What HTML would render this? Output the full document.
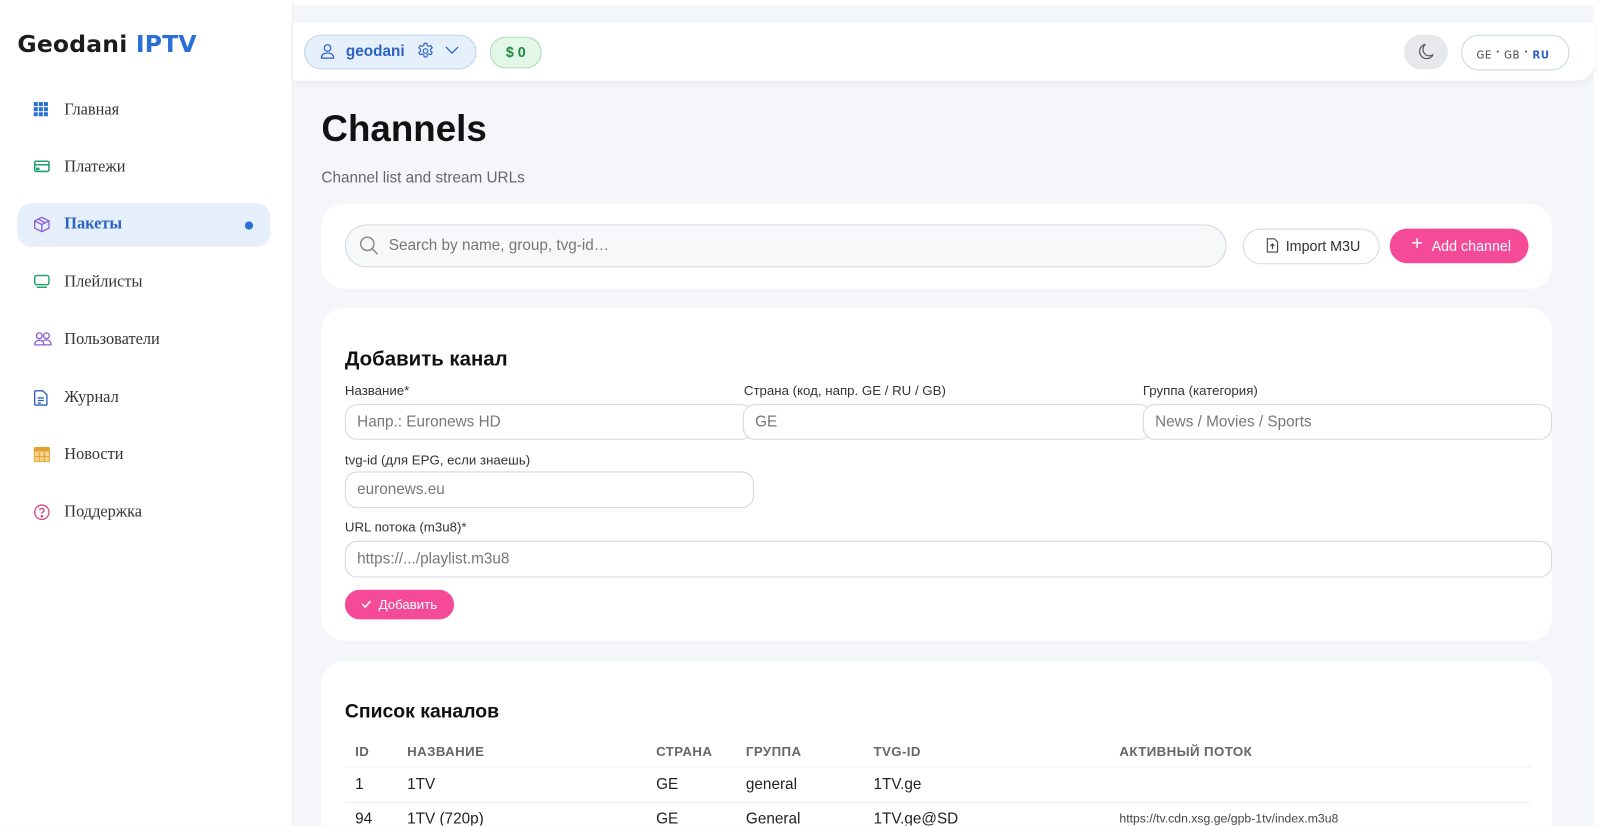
<!DOCTYPE html>
<html><head><meta charset="utf-8"><style>
*{box-sizing:border-box;margin:0;padding:0}
html,body{width:1600px;height:826px;overflow:hidden;background:#f4f6fa}
body{font-family:"Liberation Sans",sans-serif}
#w{position:absolute;left:0;top:0;width:1568px;height:809px;overflow:hidden;transform:scale(1.0204);transform-origin:0 0;background:#f4f6fa}
.sb{position:absolute;left:0;top:0;width:287px;height:809px;background:#fff;border-right:1px solid #eceef3}
.logo{position:absolute;left:17px;top:31px;font-family:"DejaVu Sans",sans-serif;font-weight:bold;font-size:23px;color:#1c1c1c;letter-spacing:0.2px}
.logo span{color:#2a6fd6}
.nav{position:absolute;left:17px;width:248px;height:43px;border-radius:14px}
.nav svg{position:absolute;left:16px;top:13px}
.nav .t{position:absolute;left:46px;top:12px;font-family:"Liberation Serif",serif;font-size:16px;color:#333}
.act{background:#e6effc}
.act .t{color:#2a62c4;font-weight:bold}
.dot{position:absolute;left:223px;top:18px;width:8px;height:8px;border-radius:50%;background:#2a6fd6}
.top{position:absolute;left:287px;top:0;width:1313px;height:5px;background:#fff}
.rs{position:absolute;left:1562px;top:0;width:6px;height:809px;background:#fff}
.hdr{position:absolute;left:287px;top:22px;width:1276px;height:57px;background:#fff;border-radius:0 0 18px 0;box-shadow:0 2px 6px rgba(0,0,0,.05)}
.pill{position:absolute;border-radius:17px}
h1{position:absolute;left:315px;top:105px;font-size:36px;font-weight:bold;color:#111}
.sub{position:absolute;left:315px;top:166px;font-size:15px;color:#666}
.card{position:absolute;left:315px;width:1206px;background:#fff;border-radius:22px}
.in{position:absolute;border:1px solid #d4d7dd;border-radius:12px;background:#fff;font-size:15px;color:#777;padding-left:11px;line-height:33px}
.lb{position:absolute;font-size:13px;color:#333}
h2{position:absolute;font-size:20px;font-weight:bold;color:#111}
.th{position:absolute;top:729px;font-size:13px;font-weight:bold;color:#666;letter-spacing:.4px}
.td{position:absolute;font-size:15px;color:#222}
.hl{position:absolute;left:338px;width:1162px;height:1px;background:#eceef1}
</style></head><body><div id="w">
<div class="sb">
<div class="logo">Geodani <span>IPTV</span></div>
<div class="nav" style="top:87px"><svg width="14" height="14" viewBox="0 0 14 14" fill="#2a6fd6"><rect x="0" y="0" width="4" height="4"/><rect x="5" y="0" width="4" height="4"/><rect x="10" y="0" width="4" height="4"/><rect x="0" y="5" width="4" height="4"/><rect x="5" y="5" width="4" height="4"/><rect x="10" y="5" width="4" height="4"/><rect x="0" y="10" width="4" height="4"/><rect x="5" y="10" width="4" height="4"/><rect x="10" y="10" width="4" height="4"/></svg><div class="t">Главная</div></div>
<div class="nav" style="top:143px"><svg width="16" height="14" viewBox="0 0 16 14" fill="none" stroke="#22a06b" stroke-width="1.5"><rect x="1" y="2" width="14" height="10" rx="1.5"/><line x1="1" y1="5.5" x2="15" y2="5.5"/><rect x="3" y="9" width="2" height="1" fill="#22a06b"/></svg><div class="t">Платежи</div></div>
<div class="nav act" style="top:199px"><svg width="16" height="16" viewBox="0 0 16 16" fill="none" stroke="#8a5fd6" stroke-width="1.3"><path d="M8 1 15 4.5V11.5L8 15 1 11.5V4.5Z M1 4.5 8 8 15 4.5 M8 8V15 M4.5 2.8 11.5 6.3"/></svg><div class="t">Пакеты</div><div class="dot"></div></div>
<div class="nav" style="top:256px"><svg width="16" height="14" viewBox="0 0 16 14" fill="none" stroke="#22a06b" stroke-width="1.4"><rect x="1" y="1" width="14" height="9" rx="2"/><line x1="3" y1="12.5" x2="13" y2="12.5"/></svg><div class="t">Плейлисты</div></div>
<div class="nav" style="top:312px"><svg width="18" height="14" viewBox="0 0 18 14" fill="none" stroke="#8a5fd6" stroke-width="1.3"><circle cx="5.5" cy="4" r="2.8"/><circle cx="12.5" cy="4" r="2.8"/><path d="M1 13c0-3 2-4.5 4.5-4.5S10 10 10 13Z M9 9c1-.6 2-.8 3.5-.8 2.5 0 4.5 1.5 4.5 4.8H10"/></svg><div class="t">Пользователи</div></div>
<div class="nav" style="top:369px"><svg width="14" height="16" viewBox="0 0 14 16" fill="none" stroke="#2a5fb6" stroke-width="1.3"><path d="M2 1h7l4 4v9a1 1 0 0 1-1 1H2a1 1 0 0 1-1-1V2a1 1 0 0 1 1-1Z M4 8h6 M4 10.5h6 M4 13h3"/></svg><div class="t">Журнал</div></div>
<div class="nav" style="top:425px"><svg width="16" height="15" viewBox="0 0 16 15"><rect x="0.5" y="0.5" width="15" height="14" rx="1" fill="#f7d48a" stroke="#e2a235"/><rect x="0.5" y="0.5" width="15" height="4" fill="#e2a235"/><g stroke="#e2a235" stroke-width="1"><line x1="5.5" y1="5" x2="5.5" y2="14"/><line x1="10.5" y1="5" x2="10.5" y2="14"/><line x1="1" y1="9.5" x2="15" y2="9.5"/></g></svg><div class="t">Новости</div></div>
<div class="nav" style="top:481px"><svg width="16" height="16" viewBox="0 0 16 16" fill="none" stroke="#d6458a" stroke-width="1.3"><circle cx="8" cy="8" r="7"/><path d="M6 6.2a2 2 0 1 1 2.8 1.8c-.6.3-.8.7-.8 1.4"/><circle cx="8" cy="11.8" r=".6" fill="#d6458a"/></svg><div class="t">Поддержка</div></div>
</div>
<div class="top"></div><div class="rs"></div>
<div class="hdr">
<div class="pill" style="left:11px;top:12px;width:169px;height:34px;background:#e6effc;border:1px solid #b9cff0"></div>
<svg style="position:absolute;left:27px;top:20px" width="14" height="16" viewBox="0 0 14 16" fill="none" stroke="#2a62c4" stroke-width="1.2"><circle cx="7" cy="5" r="3.2"/><path d="M1 15c0-3.5 2.5-5 6-5s6 1.5 6 5Z"/></svg>
<div style="position:absolute;left:52px;top:20px;font-size:15px;font-weight:bold;color:#2a62c4">geodani</div>
<svg style="position:absolute;left:121px;top:19px" width="18" height="18" viewBox="0 0 24 24" fill="none" stroke="#2a62c4" stroke-width="1.5"><circle cx="12" cy="12" r="3"/><path d="M10.3 2h3.4l.6 2.8 2 1.1 2.7-1 1.7 2.9-2.1 1.9v2.3l2.1 1.9-1.7 2.9-2.7-1-2 1.1-.6 2.8h-3.4l-.6-2.8-2-1.1-2.7 1-1.7-2.9 2.1-1.9v-2.3L3.3 7.8 5 4.9l2.7 1 2-1.1Z"/></svg>
<svg style="position:absolute;left:149px;top:23px" width="14" height="8" viewBox="0 0 14 8" fill="none" stroke="#2a62c4" stroke-width="1.3"><path d="M1 1l6 6 6-6"/></svg>
<div class="pill" style="left:193px;top:14px;width:51px;height:31px;background:#e3f7e8;border:1px solid #a8dfb6;color:#1e8a3c;font-weight:bold;font-size:14px;text-align:center;line-height:29px">$ 0</div>
<div class="pill" style="left:1089px;top:12px;width:43px;height:34px;background:#e6e8ec;border-radius:17px"></div>
<svg style="position:absolute;left:1103px;top:20px" width="16" height="17" viewBox="0 0 16 17" fill="none" stroke="#555" stroke-width="1.2"><path d="M7 1.5a7 7 0 1 0 7.5 10A6 6 0 0 1 7 1.5Z"/></svg>
<div class="pill" style="left:1145px;top:12px;width:106px;height:35px;border:1px solid #c8d3e6;font-family:'DejaVu Sans',sans-serif;font-size:10px;color:#444;line-height:33px;padding-left:14px;letter-spacing:.5px">GE <sup style="font-size:7px">•</sup> GB <sup style="font-size:7px">•</sup> <b style="color:#2a62c4">RU</b></div>
</div>
<h1>Channels</h1>
<div class="sub">Channel list and stream URLs</div>
<div class="card" style="top:200px;height:83px"></div>
<div class="in" style="left:338px;top:220px;width:864px;height:42px;border-radius:21px;background:#f7f8fa;line-height:40px;padding-left:42px;font-size:15px">Search by name, group, tvg-id…</div>
<svg style="position:absolute;left:352px;top:231px" width="19" height="19" viewBox="0 0 19 19" fill="none" stroke="#888" stroke-width="1.4"><circle cx="8" cy="8" r="6.5"/><line x1="12.8" y1="12.8" x2="18" y2="18"/></svg>
<div class="in" style="left:1218px;top:224px;width:134px;height:35px;border-radius:18px;color:#333;font-size:14px;padding-left:41px;line-height:33px">Import M3U</div>
<svg style="position:absolute;left:1241px;top:233px" width="12" height="15" viewBox="0 0 12 15" fill="none" stroke="#444" stroke-width="1.1"><path d="M1 1h7l3 3v10H1Z M6 11V6 M4 8l2-2 2 2"/></svg>
<div class="pill" style="left:1362px;top:224px;width:136px;height:34px;background:#f54a98;color:#fff;font-size:14px;line-height:34px;padding-left:41px">Add channel</div>
<div style="position:absolute;left:1383px;top:228px;color:#fff;font-size:20px;font-weight:300">+</div>
<div class="card" style="top:302px;height:326px"></div>
<h2 style="left:338px;top:341px">Добавить канал</h2>
<div class="lb" style="left:338px;top:375px">Название*</div>
<div class="lb" style="left:729px;top:375px">Страна (код, напр. GE / RU / GB)</div>
<div class="lb" style="left:1120px;top:375px">Группа (категория)</div>
<div class="in" style="left:338px;top:396px;width:400px;height:35px">Напр.: Euronews HD</div>
<div class="in" style="left:728px;top:396px;width:401px;height:35px">GE</div>
<div class="in" style="left:1120px;top:396px;width:401px;height:35px">News / Movies / Sports</div>
<div class="lb" style="left:338px;top:443px">tvg-id (для EPG, если знаешь)</div>
<div class="in" style="left:338px;top:462px;width:401px;height:36px">euronews.eu</div>
<div class="lb" style="left:338px;top:509px">URL потока (m3u8)*</div>
<div class="in" style="left:338px;top:530px;width:1183px;height:36px">https://.../playlist.m3u8</div>
<div class="pill" style="left:338px;top:578px;width:107px;height:29px;background:#f54a98;color:#fff;font-size:13px;line-height:29px;padding-left:33px;border-radius:15px">Добавить</div>
<svg style="position:absolute;left:354px;top:588px" width="10" height="8" viewBox="0 0 10 8" fill="none" stroke="#fff" stroke-width="1.5"><path d="M1 4l3 3 5-6"/></svg>
<div class="card" style="top:648px;height:200px"></div>
<h2 style="left:338px;top:687px;font-size:19px">Список каналов</h2>
<div class="th" style="left:348px">ID</div>
<div class="th" style="left:399px">НАЗВАНИЕ</div>
<div class="th" style="left:643px">СТРАНА</div>
<div class="th" style="left:731px">ГРУППА</div>
<div class="th" style="left:856px">TVG-ID</div>
<div class="th" style="left:1097px">АКТИВНЫЙ ПОТОК</div>
<div class="hl" style="top:751px"></div>
<div class="td" style="left:348px;top:760px">1</div><div class="td" style="left:399px;top:760px">1TV</div><div class="td" style="left:643px;top:760px">GE</div><div class="td" style="left:731px;top:760px">general</div><div class="td" style="left:856px;top:760px">1TV.ge</div>
<div class="hl" style="top:786px"></div>
<div class="td" style="left:348px;top:794px">94</div><div class="td" style="left:399px;top:794px">1TV (720p)</div><div class="td" style="left:643px;top:794px">GE</div><div class="td" style="left:731px;top:794px">General</div><div class="td" style="left:856px;top:794px">1TV.ge@SD</div><div class="td" style="left:1097px;top:795px;font-size:12px;color:#444">https://tv.cdn.xsg.ge/gpb-1tv/index.m3u8</div>
</div></body></html>
